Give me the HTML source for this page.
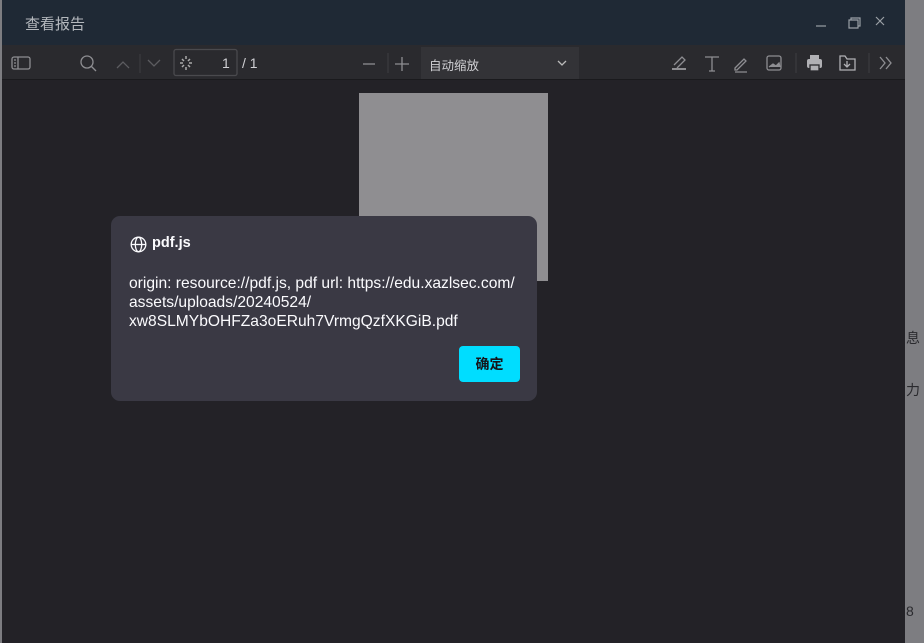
<!DOCTYPE html>
<html><head><meta charset="utf-8"><style>
*{margin:0;padding:0;box-sizing:border-box}
body{width:924px;height:643px;overflow:hidden;background:#7d7d81;font-family:"Liberation Sans","Noto Sans CJK SC",sans-serif;position:relative}
.win{position:absolute;left:2px;top:0;width:903px;height:643px;background:#232227}
.title{position:absolute;left:0;top:0;width:903px;height:45px;background:#1f2935;color:#b4b8bd;font-size:15px}
.title span{position:absolute;left:23px;top:13px}
.tb{position:absolute;left:0;top:45px;width:903px;height:35px;background:#2a2a2e;border-bottom:1px solid #1a1a1d}
.ic{position:absolute}
.page{position:absolute;left:357px;top:93px;width:189px;height:188px;background:#8f8e91}
.dlg{position:absolute;left:109px;top:216px;width:426px;height:185px;background:#3a3944;border-radius:9px;color:#fbfbfe;font-size:15.6px}
.btn{position:absolute;left:348px;top:130px;width:61px;height:36px;background:#00ddff;border-radius:4px;color:#15141a;font-weight:bold;font-size:14px;text-align:center;line-height:36px}
.side{position:absolute;color:#2a2a2e;font-size:14px}
</style></head><body>
<div class="side" style="left:906px;top:328px">息</div>
<div class="side" style="left:906px;top:380px">力</div>
<div class="side" style="left:906px;top:603px">8</div>
<div class="win">
<div class="title"><span>查看报告</span>
<svg class="ic" style="left:810px;top:14px" width="80" height="16" fill="none" stroke="#9aa0a6" stroke-width="1.2"><path d="M4 12h10"/><path d="M37 6h9v8h-9z M39 6V4h9v8h-2"/><path d="M64 3l8 8M72 3l-8 8"/></svg>
</div>
<div class="tb">
<svg width="903" height="35" fill="none" stroke="#8e8e92" stroke-width="1.3">
<rect x="10" y="12" width="18" height="12" rx="2"/><path d="M16 12v12M12 15h2M12 18h2M12 21h2"/>
<circle cx="85" cy="17" r="6"/><path d="M89 21l5 5"/>
<path d="M115 23l6-6 6 6" stroke="#5c5c60"/><line x1="138" y1="9" x2="138" y2="28" stroke="#3a3a3e"/>
<path d="M146 15l6 6 6-6" stroke="#5c5c60"/>
<rect x="172" y="4.5" width="63" height="26" rx="2" stroke="#4a4a4e"/>
<g stroke="#aaa" stroke-width="1.5"><path d="M184 11v3M184 22v3M178 18h3M187 18h3M180 14l2 2M186 20l2 2M180 22l2-2M186 16l2-2"/></g>
<path d="M361 19h12"/><line x1="386" y1="8" x2="386" y2="28" stroke="#3a3a3e"/><path d="M393 19h14M400 12v14"/>
<path d="M670 24h14" stroke-width="2"/><path d="M672 20l8-8 3 3-8 8"/>
<path d="M703 12h14M710 12v14M707 26h6"/>
<path d="M733 23l9-9 2 2-9 9h-2z M733 27h12"/>
<rect x="765" y="11" width="14" height="14" rx="2"/><path d="M767 22l4-3 3 2 3-3 1 4" fill="#8e8e92"/>
<line x1="794" y1="8" x2="794" y2="28" stroke="#3a3a3e"/>
<rect x="805" y="14" width="15" height="9" rx="2" fill="#b0b0b4" stroke="none"/><rect x="808" y="10" width="9" height="4" fill="#b0b0b4" stroke="none"/><rect x="808" y="20" width="9" height="6" fill="#b0b0b4" stroke="#2a2a2e"/>
<path d="M838 11h5l2 3h8v11h-15z M845 16v6M842 19l3 3 3-3" stroke="#b0b0b4"/>
<line x1="867" y1="8" x2="867" y2="28" stroke="#3a3a3e"/>
<path d="M878 12l5 6-5 6M884 12l5 6-5 6"/>
</svg>
<div style="position:absolute;left:220px;top:10px;color:#d0d0d4;font-size:14px">1</div>
<div style="position:absolute;left:240px;top:10px;color:#d0d0d4;font-size:14px">/ 1</div>
<div style="position:absolute;left:419px;top:2px;width:158px;height:32px;background:#333337"></div>
<div style="position:absolute;left:427px;top:10px;color:#d0d0d4;font-size:12.5px">自动缩放</div>
<svg style="position:absolute;left:553px;top:13px" width="14" height="10" fill="none" stroke="#bbb" stroke-width="1.3"><path d="M3 3l4 4 4-4"/></svg>
</div>
<div class="page"></div>
<div class="dlg">
<svg style="position:absolute;left:19px;top:20px" width="17" height="17" fill="none" stroke="#fbfbfe" stroke-width="1.3"><circle cx="8.5" cy="8.5" r="7.3"/><ellipse cx="8.5" cy="8.5" rx="3.2" ry="7.3"/><path d="M1.2 8.5h14.6"/></svg>
<div style="position:absolute;left:41px;top:19px;font-weight:bold;font-size:14.5px">pdf.js</div>
<div style="position:absolute;left:18px;top:58px;width:405px;line-height:19px;white-space:nowrap">origin: resource://pdf.js, pdf url: https://edu.xazlsec.com/<br>assets/uploads/20240524/<br>xw8SLMYbOHFZa3oERuh7VrmgQzfXKGiB.pdf</div>
<div class="btn">确定</div>
</div>
</div>
</body></html>
